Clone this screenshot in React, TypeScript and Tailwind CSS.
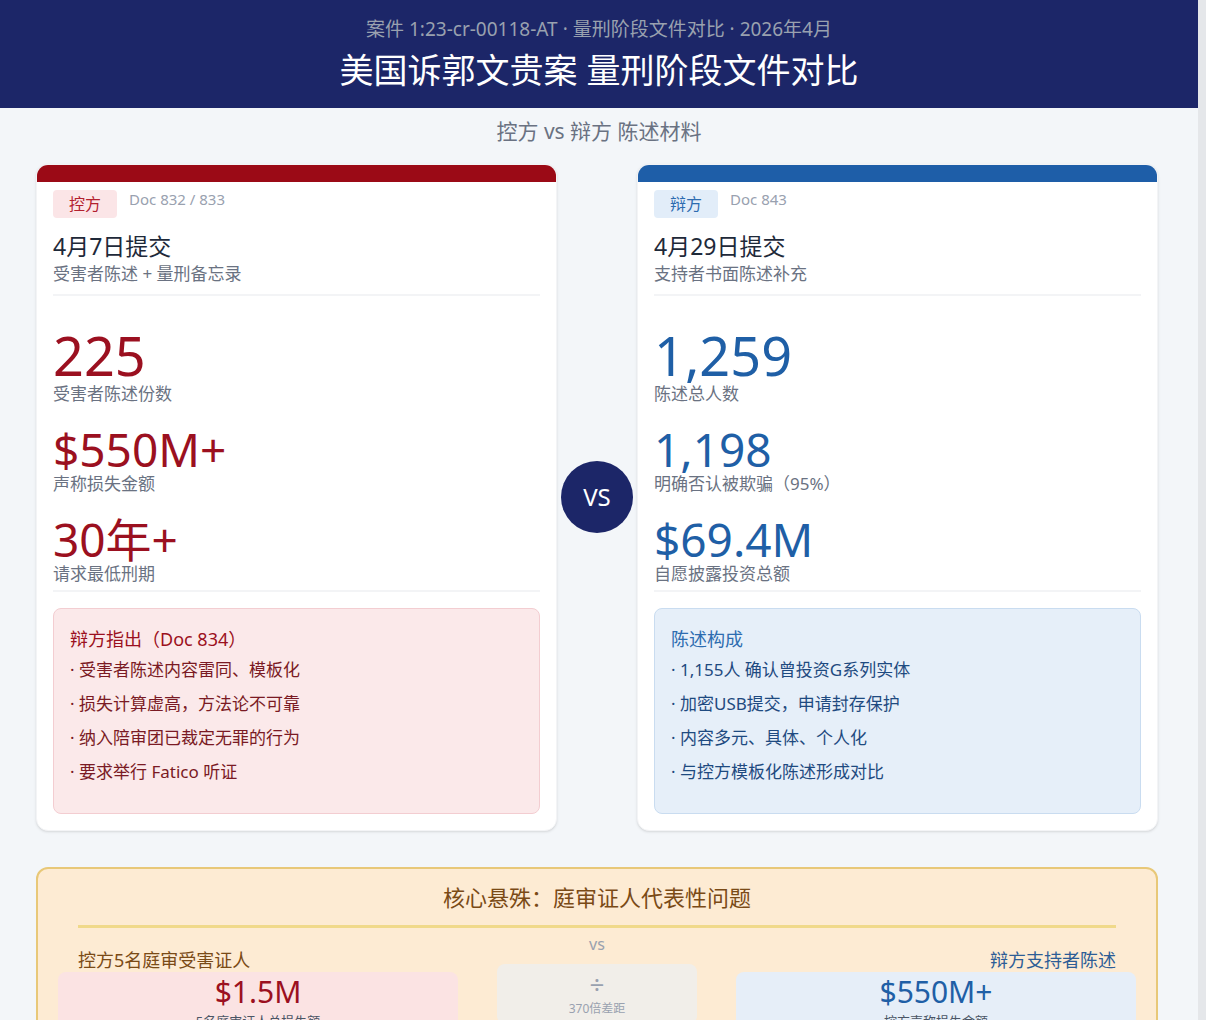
const font = { fontFamily: '"Noto Sans", "Noto Sans CJK SC", sans-serif' };

function Stat({ value, label, color, size }: { value: string; label: string; color: string; size: string }) {
  return (
    <div>
      <div className={`${size} leading-none ${color}`}>{value}</div>
      <div className="text-[17px] leading-6 text-gray-500">{label}</div>
    </div>
  );
}

function Card({ side }: { side: "p" | "d" }) {
  const p = side === "p";
  const color = p ? "text-[#9b1020]" : "text-[#1f5fa6]";
  return (
    <div className="w-[521px] bg-white rounded-xl shadow-sm border border-gray-100 overflow-hidden">
      <div className={`h-[17px] ${p ? "bg-[#9b0a16]" : "bg-[#1e5ea8]"}`} />
      <div className="px-4 pt-1 pb-4">
        <div className="flex items-center gap-3 mt-1">
          <span className={`px-4 py-[2px] rounded text-[16px] ${p ? "bg-[#fbe5e7] text-[#b3202e]" : "bg-[#e2edf9] text-[#2d6cb0]"}`}>{p ? "控方" : "辩方"}</span>
          <span className="text-[15px] text-gray-400 -mt-2">{p ? "Doc 832 / 833" : "Doc 843"}</span>
        </div>
        <div className="mt-3 text-[23px] text-gray-800 leading-8">{p ? "4月7日提交" : "4月29日提交"}</div>
        <div className="text-[17px] text-gray-500 leading-6">{p ? "受害者陈述 + 量刑备忘录" : "支持者书面陈述补充"}</div>
        <div className="border-b-2 border-gray-100 mt-2" />
        <div className="pt-8 pb-1 border-b-2 border-gray-100">
          {p ? (
            <>
              <Stat value="225" label="受害者陈述份数" color={color} size="text-[54px]" />
              <div className="mt-5"><Stat value="$550M+" label="声称损失金额" color={color} size="text-[46px]" /></div>
              <div className="mt-5"><Stat value="30年+" label="请求最低刑期" color={color} size="text-[46px]" /></div>
            </>
          ) : (
            <>
              <Stat value="1,259" label="陈述总人数" color={color} size="text-[54px]" />
              <div className="mt-5"><Stat value="1,198" label="明确否认被欺骗（95%）" color={color} size="text-[46px]" /></div>
              <div className="mt-5"><Stat value="$69.4M" label="自愿披露投资总额" color={color} size="text-[46px]" /></div>
            </>
          )}
        </div>
        <div className={`mt-4 rounded-lg border px-4 pt-4 pb-6 ${p ? "bg-[#fbe9ea] border-[#f3cdd1]" : "bg-[#e6eff9] border-[#c9dcf0]"}`}>
          <div className={`text-[18px] leading-7 ${p ? "text-[#9b1020]" : "text-[#2d6cb0]"}`}>{p ? "辩方指出（Doc 834）" : "陈述构成"}</div>
          {(p
            ? ["受害者陈述内容雷同、模板化", "损失计算虚高，方法论不可靠", "纳入陪审团已裁定无罪的行为", "要求举行 Fatico 听证"]
            : ["1,155人 确认曾投资G系列实体", "加密USB提交，申请封存保护", "内容多元、具体、个人化", "与控方模板化陈述形成对比"]
          ).map((t) => (
            <div key={t} className={`text-[17px] leading-[34px] ${p ? "text-[#7a1a24]" : "text-[#1e4a80]"}`}>· {t}</div>
          ))}
        </div>
      </div>
    </div>
  );
}

export default function App() {
  return (
    <div style={font} className="w-[1206px] h-[1020px] overflow-hidden bg-[#f3f6f9] flex">
      <div className="w-[1198px]">
        <div className="h-[108px] bg-[#1c2668] flex flex-col items-center justify-center">
          <div className="text-[19px] text-gray-400">案件 1:23-cr-00118-AT · 量刑阶段文件对比 · 2026年4月</div>
          <div className="text-[34px] text-white leading-[46px] mt-1">美国诉郭文贵案 量刑阶段文件对比</div>
        </div>
        <div className="text-center text-[21px] text-gray-500 mt-2">控方 vs 辩方 陈述材料</div>
        <div className="flex items-center pl-9 mt-4">
          <Card side="p" />
          <div className="w-[80px] flex justify-center">
            <div className="w-[72px] h-[72px] rounded-full bg-[#1c2668] text-white text-[24px] flex items-center justify-center">VS</div>
          </div>
          <Card side="d" />
        </div>
        <div className="ml-9 w-[1122px] mt-9 rounded-xl border-2 border-[#e8c878] bg-[#fdebd3] px-10 pt-2 h-[200px]">
          <div className="text-center text-[22px] text-[#7a4a16] leading-10">核心悬殊：庭审证人代表性问题</div>
          <div className="h-[3px] bg-[#f0d98a] mt-2" />
          <div className="flex justify-between">
            <div className="w-[360px]">
              <div className="text-[18px] text-[#7a4a16] mt-5 leading-6">控方5名庭审受害证人</div>
              <div className="bg-[#fbe3e3] rounded-lg h-[60px] -mx-5 text-center">
                <div className="text-[30px] text-[#9b1020] leading-10">$1.5M</div>
                <div className="text-[13px] text-gray-600">5名庭审证人总损失额</div>
              </div>
            </div>
            <div className="w-[200px] text-center">
              <div className="text-[16px] text-gray-400 mt-1">vs</div>
              <div className="bg-[#f1eee9] rounded-lg h-[60px] mt-2 pt-1">
                <div className="text-[26px] text-gray-400 leading-8">÷</div>
                <div className="text-[12px] text-gray-400">370倍差距</div>
              </div>
            </div>
            <div className="w-[360px] text-right">
              <div className="text-[18px] text-[#2d5d96] mt-5 leading-6">辩方支持者陈述</div>
              <div className="bg-[#e6eef8] rounded-lg h-[60px] -mx-5 text-center">
                <div className="text-[30px] text-[#1f5fa6] leading-10">$550M+</div>
                <div className="text-[13px] text-gray-600">控方声称损失金额</div>
              </div>
            </div>
          </div>
        </div>
      </div>
      <div className="flex-1 bg-[#e5e7ea]" />
    </div>
  );
}
